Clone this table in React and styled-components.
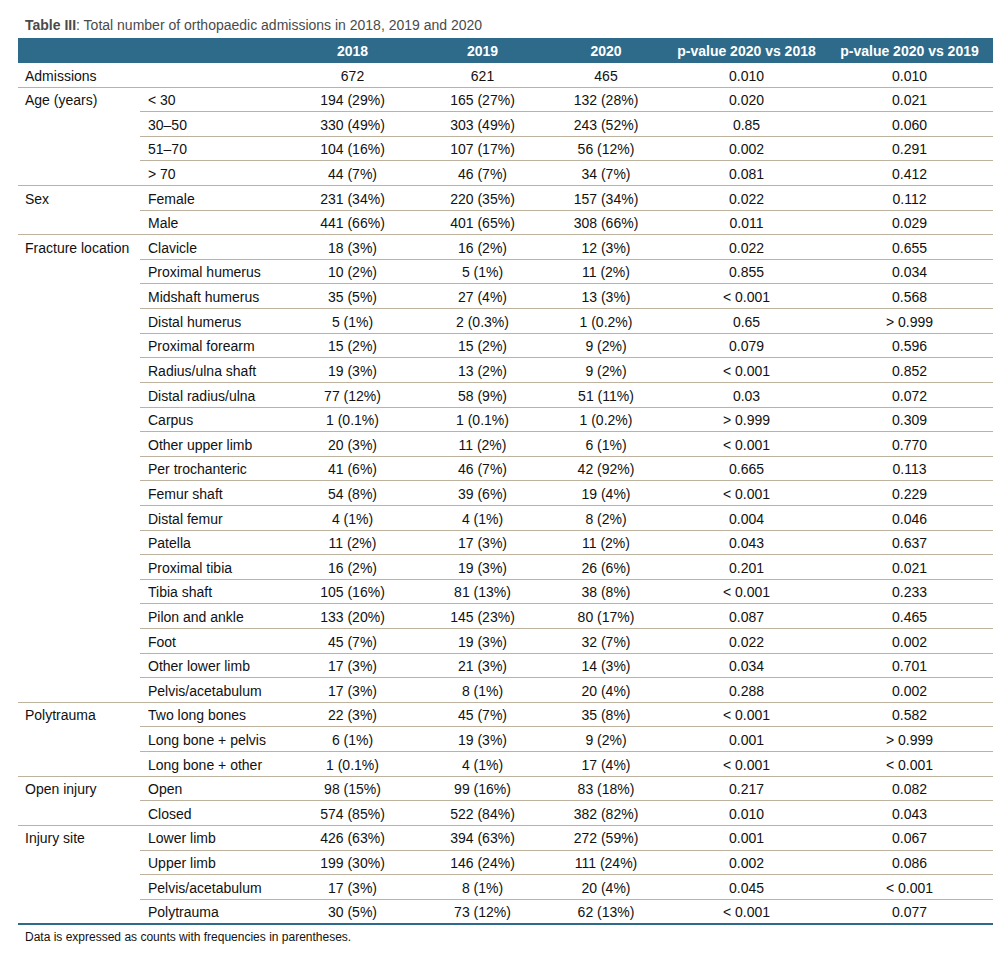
import React from "react";
import styled, { createGlobalStyle } from "styled-components";

const GlobalStyle = createGlobalStyle`
  html, body {
    margin: 0;
    padding: 0;
    background: #ffffff;
  }
  body {
    font-family: "Liberation Sans", Arial, sans-serif;
    color: #111111;
  }
`;

const Page = styled.div`
  padding: 17px 15px 0 18px;
  width: 975px;
`;

const Caption = styled.div`
  padding-left: 7px;
  font-size: 14px;
  line-height: 16px;
  color: #4a4a4a;
  margin-bottom: 5px;
`;

const Table = styled.table`
  width: 975px;
  border-collapse: collapse;
  table-layout: fixed;
  font-size: 14px;
  line-height: 16px;
`;

const HeadCell = styled.th`
  background: #2e6b8b;
  color: #ffffff;
  font-weight: bold;
  text-align: center;
  padding: 0;
  height: 25px;
  white-space: nowrap;
`;

const Cell = styled.td`
  padding: 4.6px 7px 3.03px ${(p) => (p.$pad ? `${p.$pad}px` : "7px")};
  text-align: ${(p) => (p.$center ? "center" : "left")};
  vertical-align: top;
  white-space: nowrap;
  border-bottom: ${(p) => (p.$last ? "2px solid #2e6b8b" : "1px solid #bdb29e")};
`;

const Footnote = styled.div`
  padding: 5px 0 0 7px;
  font-size: 12px;
  color: #111111;
`;

const groups = [
  {
    label: "Admissions",
    rows: [["", "672", "621", "465", "0.010", "0.010"]],
  },
  {
    label: "Age (years)",
    rows: [
      ["< 30", "194 (29%)", "165 (27%)", "132 (28%)", "0.020", "0.021"],
      ["30–50", "330 (49%)", "303 (49%)", "243 (52%)", "0.85", "0.060"],
      ["51–70", "104 (16%)", "107 (17%)", "56 (12%)", "0.002", "0.291"],
      ["> 70", "44 (7%)", "46 (7%)", "34 (7%)", "0.081", "0.412"],
    ],
  },
  {
    label: "Sex",
    rows: [
      ["Female", "231 (34%)", "220 (35%)", "157 (34%)", "0.022", "0.112"],
      ["Male", "441 (66%)", "401 (65%)", "308 (66%)", "0.011", "0.029"],
    ],
  },
  {
    label: "Fracture location",
    rows: [
      ["Clavicle", "18 (3%)", "16 (2%)", "12 (3%)", "0.022", "0.655"],
      ["Proximal humerus", "10 (2%)", "5 (1%)", "11 (2%)", "0.855", "0.034"],
      ["Midshaft humerus", "35 (5%)", "27 (4%)", "13 (3%)", "< 0.001", "0.568"],
      ["Distal humerus", "5 (1%)", "2 (0.3%)", "1 (0.2%)", "0.65", "> 0.999"],
      ["Proximal forearm", "15 (2%)", "15 (2%)", "9 (2%)", "0.079", "0.596"],
      ["Radius/ulna shaft", "19 (3%)", "13 (2%)", "9 (2%)", "< 0.001", "0.852"],
      ["Distal radius/ulna", "77 (12%)", "58 (9%)", "51 (11%)", "0.03", "0.072"],
      ["Carpus", "1 (0.1%)", "1 (0.1%)", "1 (0.2%)", "> 0.999", "0.309"],
      ["Other upper limb", "20 (3%)", "11 (2%)", "6 (1%)", "< 0.001", "0.770"],
      ["Per trochanteric", "41 (6%)", "46 (7%)", "42 (92%)", "0.665", "0.113"],
      ["Femur shaft", "54 (8%)", "39 (6%)", "19 (4%)", "< 0.001", "0.229"],
      ["Distal femur", "4 (1%)", "4 (1%)", "8 (2%)", "0.004", "0.046"],
      ["Patella", "11 (2%)", "17 (3%)", "11 (2%)", "0.043", "0.637"],
      ["Proximal tibia", "16 (2%)", "19 (3%)", "26 (6%)", "0.201", "0.021"],
      ["Tibia shaft", "105 (16%)", "81 (13%)", "38 (8%)", "< 0.001", "0.233"],
      ["Pilon and ankle", "133 (20%)", "145 (23%)", "80 (17%)", "0.087", "0.465"],
      ["Foot", "45 (7%)", "19 (3%)", "32 (7%)", "0.022", "0.002"],
      ["Other lower limb", "17 (3%)", "21 (3%)", "14 (3%)", "0.034", "0.701"],
      ["Pelvis/acetabulum", "17 (3%)", "8 (1%)", "20 (4%)", "0.288", "0.002"],
    ],
  },
  {
    label: "Polytrauma",
    rows: [
      ["Two long bones", "22 (3%)", "45 (7%)", "35 (8%)", "< 0.001", "0.582"],
      ["Long bone + pelvis", "6 (1%)", "19 (3%)", "9 (2%)", "0.001", "> 0.999"],
      ["Long bone + other", "1 (0.1%)", "4 (1%)", "17 (4%)", "< 0.001", "< 0.001"],
    ],
  },
  {
    label: "Open injury",
    rows: [
      ["Open", "98 (15%)", "99 (16%)", "83 (18%)", "0.217", "0.082"],
      ["Closed", "574 (85%)", "522 (84%)", "382 (82%)", "0.010", "0.043"],
    ],
  },
  {
    label: "Injury site",
    rows: [
      ["Lower limb", "426 (63%)", "394 (63%)", "272 (59%)", "0.001", "0.067"],
      ["Upper limb", "199 (30%)", "146 (24%)", "111 (24%)", "0.002", "0.086"],
      ["Pelvis/acetabulum", "17 (3%)", "8 (1%)", "20 (4%)", "0.045", "< 0.001"],
      ["Polytrauma", "30 (5%)", "73 (12%)", "62 (13%)", "< 0.001", "0.077"],
    ],
  },
];

const widths = [122, 145, 135, 125, 122, 159, 167];
const headers = ["", "", "2018", "2019", "2020", "p-value 2020 vs 2018", "p-value 2020 vs 2019"];

export default function App() {
  return (
    <>
      <GlobalStyle />
      <Page>
        <Caption>
          <b>Table III</b>: Total number of orthopaedic admissions in 2018, 2019 and 2020
        </Caption>
        <Table>
          <colgroup>
            {widths.map((w, i) => (
              <col key={i} style={{ width: w }} />
            ))}
          </colgroup>
          <thead>
            <tr>
              {headers.map((h, i) => (
                <HeadCell key={i}>{h}</HeadCell>
              ))}
            </tr>
          </thead>
          <tbody>
            {groups.map((g, gi) => {
              const lastGroup = gi === groups.length - 1;
              return g.rows.map((r, ri) => {
                const last = lastGroup && ri === g.rows.length - 1;
                return (
                  <tr key={`${gi}-${ri}`}>
                    {ri === 0 && (
                      <Cell rowSpan={g.rows.length} $last={lastGroup}>
                        {g.label}
                      </Cell>
                    )}
                    <Cell $pad={8} $last={last}>
                      {r[0]}
                    </Cell>
                    {r.slice(1).map((v, ci) => (
                      <Cell key={ci} $center $last={last}>
                        {v}
                      </Cell>
                    ))}
                  </tr>
                );
              });
            })}
          </tbody>
        </Table>
        <Footnote>Data is expressed as counts with frequencies in parentheses.</Footnote>
      </Page>
    </>
  );
}
